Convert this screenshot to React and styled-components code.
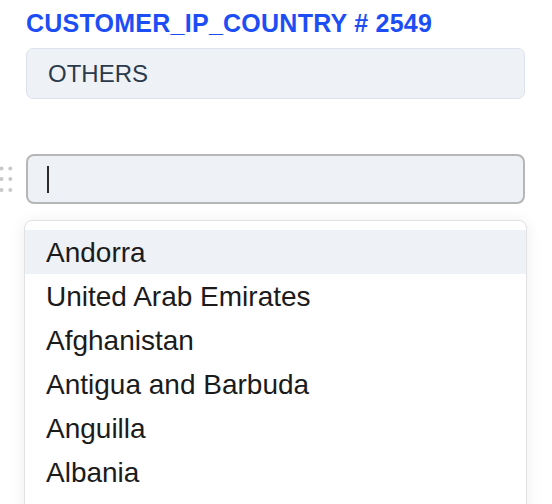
import React from "react";
import styled, { createGlobalStyle } from "styled-components";

const Global = createGlobalStyle`
  html, body { margin: 0; padding: 0; background: #ffffff; overflow: hidden; }
  body { font-family: "Liberation Sans", Arial, Helvetica, sans-serif; }
`;

const Page = styled.div`
  display: grid;
  grid-template-columns: 26px 1fr;
  padding: 8px 27px 0 0;
  width: 552px;
  box-sizing: border-box;
`;

const Title = styled.h2`
  grid-column: 2;
  margin: 0;
  font-size: 25px;
  line-height: 30px;
  font-weight: 700;
  letter-spacing: 0.25px;
  color: #1d4ef5;
`;

const ValueBox = styled.div`
  grid-column: 2;
  margin-top: 10px;
  height: 51px;
  box-sizing: border-box;
  border: 1px solid #dde3ec;
  border-radius: 7px;
  background: #eef1f6;
  padding-left: 21px;
  font-size: 24px;
  line-height: 49px;
  color: #2b3a4b;
`;

const Handle = styled.div`
  grid-column: 1;
  align-self: center;
  display: flex;
  margin-top: 55px;
`;

const SearchBox = styled.div`
  grid-column: 2;
  margin-top: 55px;
  height: 50px;
  box-sizing: border-box;
  border: 2px solid #b6b6b6;
  border-radius: 8px;
  background: #eef1f6;
  display: flex;
  align-items: center;
  padding-left: 19px;
`;

const Caret = styled.span`
  display: block;
  width: 2px;
  height: 27px;
  background: #2a2a2a;
`;

const Dropdown = styled.ul`
  grid-column: 2;
  list-style: none;
  margin: 16px -2px 0 -2px;
  padding: 9px 0 30px 0;
  border: 1px solid #e2e2e2;
  border-radius: 8px;
  background: #ffffff;
  box-shadow: 0 2px 16px rgba(0, 0, 0, 0.08);
`;

const Option = styled.li`
  height: 44px;
  box-sizing: border-box;
  padding: 2px 0 0 21px;
  font-size: 28px;
  line-height: 42px;
  color: #1b1b1b;
  white-space: nowrap;
  background: ${(p) => (p.$active ? "#eef1f6" : "transparent")};
`;

const countries = [
  "Andorra",
  "United Arab Emirates",
  "Afghanistan",
  "Antigua and Barbuda",
  "Anguilla",
  "Albania",
];

function DragDots() {
  const xs = [1.5, 10.3];
  const ys = [2.5, 13, 24];
  return (
    <svg width="13" height="27" viewBox="0 0 13 27">
      {ys.map((y) =>
        xs.map((x) => (
          <circle key={`${x}-${y}`} cx={x} cy={y} r="2" fill="#c9c9c9" />
        ))
      )}
    </svg>
  );
}

export default function App() {
  return (
    <>
      <Global />
      <Page>
        <Title>CUSTOMER_IP_COUNTRY # 2549</Title>
        <ValueBox>OTHERS</ValueBox>
        <Handle>
          <DragDots />
        </Handle>
        <SearchBox>
          <Caret />
        </SearchBox>
        <Dropdown>
          {countries.map((c, i) => (
            <Option key={c} $active={i === 0}>
              {c}
            </Option>
          ))}
        </Dropdown>
      </Page>
    </>
  );
}
